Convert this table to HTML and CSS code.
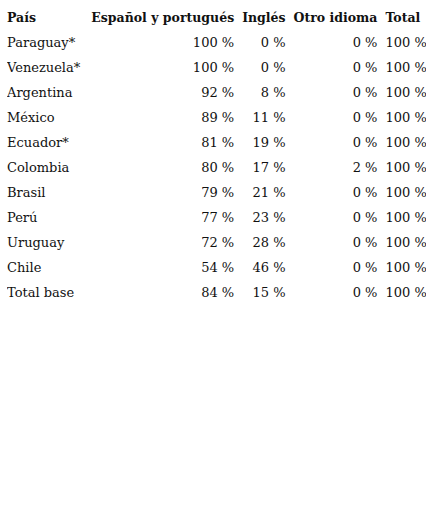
FILE: index.html
```html
<!DOCTYPE html>
<html lang="es">
<head>
<meta charset="utf-8">
<link rel="stylesheet" href="styles.css">
</head>
<body>
<table class="data">
<thead>
<tr><th>País</th><th class="c2">Español y portugués</th><th>Inglés</th><th>Otro idioma</th><th>Total</th></tr>
</thead>
<tbody>
<tr><td class="l">Paraguay*</td><td class="c2">100 %</td><td>0 %</td><td>0 %</td><td>100 %</td></tr>
<tr><td class="l">Venezuela*</td><td class="c2">100 %</td><td>0 %</td><td>0 %</td><td>100 %</td></tr>
<tr><td class="l">Argentina</td><td class="c2">92 %</td><td>8 %</td><td>0 %</td><td>100 %</td></tr>
<tr><td class="l">México</td><td class="c2">89 %</td><td>11 %</td><td>0 %</td><td>100 %</td></tr>
<tr><td class="l">Ecuador*</td><td class="c2">81 %</td><td>19 %</td><td>0 %</td><td>100 %</td></tr>
<tr><td class="l">Colombia</td><td class="c2">80 %</td><td>17 %</td><td>2 %</td><td>100 %</td></tr>
<tr><td class="l">Brasil</td><td class="c2">79 %</td><td>21 %</td><td>0 %</td><td>100 %</td></tr>
<tr><td class="l">Perú</td><td class="c2">77 %</td><td>23 %</td><td>0 %</td><td>100 %</td></tr>
<tr><td class="l">Uruguay</td><td class="c2">72 %</td><td>28 %</td><td>0 %</td><td>100 %</td></tr>
<tr><td class="l">Chile</td><td class="c2">54 %</td><td>46 %</td><td>0 %</td><td>100 %</td></tr>
<tr><td class="l">Total base</td><td class="c2">84 %</td><td>15 %</td><td>0 %</td><td>100 %</td></tr>
</tbody>
</table>
</body>
</html>
```
FILE: styles.css
```css
html, body { background: #fff; }
body {
  margin: 5px 7px;
  font-family: "DejaVu Serif", serif;
  font-size: 13px;
  color: #111;
}
.data { border-collapse: collapse; }
.data th, .data td {
  height: 25px;
  padding: 0 0 0 8px;
  text-align: right;
  white-space: nowrap;
}
.data th:first-child, .data .l { padding-left: 0; }
.data .c2 { padding-left: 11px; }
.data th {
  font-weight: bold;
  font-size: 12.5px;
  text-align: left;
}
.data .l { text-align: left; }
```
